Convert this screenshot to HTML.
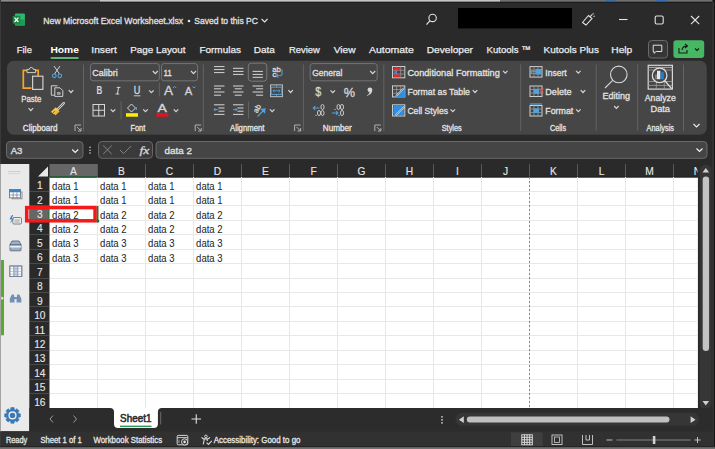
<!DOCTYPE html>
<html><head><meta charset="utf-8">
<style>
*{margin:0;padding:0}
html,body{width:715px;height:449px;overflow:hidden;background:#1f1f1f}
svg{display:block;font-family:"Liberation Sans",sans-serif}
</style></head><body>
<svg width="715" height="449" viewBox="0 0 715 449">
<rect x="0" y="0" width="715" height="449" rx="0" fill="#2a2a2a" />
<rect x="0" y="0" width="100" height="1.8" rx="0" fill="#8a8a8a" />
<rect x="100" y="0" width="400" height="1.8" rx="0" fill="#c4c4c4" />
<rect x="500" y="0" width="215" height="1.8" rx="0" fill="#707070" />
<rect x="606" y="0" width="10" height="1.8" rx="0" fill="#3a6ea8" />
<rect x="655" y="0" width="12" height="1.8" rx="0" fill="#3a6ea8" />
<rect x="0" y="1.8" width="715" height="1" rx="0" fill="#1c1c1c" />
<rect x="0" y="0" width="1" height="449" rx="0" fill="#3a3a3a" />
<rect x="712.5" y="0" width="2.5" height="449" rx="0" fill="#161616" />
<rect x="712.6" y="2" width="1" height="445" rx="0" fill="#4a4a4a" />
<rect x="14.9" y="13.6" width="10" height="12" rx="1" fill="#2fb872" />
<rect x="14.9" y="19.6" width="10" height="6" rx="0.5" fill="#1f9a55" />
<rect x="12.7" y="15.8" width="7.6" height="7.9" rx="0.8" fill="#17873f" />
<path d="M14.6,17.6 L18.4,22 M18.4,17.6 L14.6,22" stroke="#ffffff" fill="none" stroke-width="1.3" />
<text x="43.3" y="23.5" font-size="9.8" fill="#e3e3e3" font-weight="normal" text-anchor="start" textLength="139.8" lengthAdjust="spacingAndGlyphs"  stroke="#e3e3e3" stroke-width="0.3">New Microsoft Excel Worksheet.xlsx</text>
<circle cx="189" cy="21" r="1.3" fill="#e3e3e3"/>
<text x="194.3" y="23.5" font-size="9.8" fill="#e3e3e3" font-weight="normal" text-anchor="start" textLength="63.7" lengthAdjust="spacingAndGlyphs"  stroke="#e3e3e3" stroke-width="0.3">Saved to this PC</text>
<path d="M261.6,19.0 L264.6,22.0 L267.6,19.0" stroke="#e3e3e3" fill="none" stroke-width="1.1" />
<circle cx="432.6" cy="17.9" r="3.7" fill="none" stroke="#e3e3e3" stroke-width="1.1"/>
<line x1="430" y1="20.6" x2="426.5" y2="24.6" stroke="#e3e3e3" stroke-width="1.2" />
<rect x="458" y="8" width="114" height="20.4" rx="0" fill="#000000" />
<path d="M582.5,22.5 L588.5,15.5 L592,18.5 L586,25 Z M582.5,22.5 l3.5,2.5 M590,16.8 l2,-2.2 M592.5,14.5 l1,-1.2 M593.5,16.5 l1.2,-0.6" stroke="#e3e3e3" fill="none" stroke-width="1.1" />
<line x1="619" y1="19.5" x2="627.5" y2="19.5" stroke="#e3e3e3" stroke-width="1.1" />
<rect x="655.2" y="16" width="8" height="8" rx="1.5" fill="none" stroke="#e3e3e3" stroke-width="1.1" />
<line x1="691" y1="16" x2="699.2" y2="24.2" stroke="#e3e3e3" stroke-width="1.1" />
<line x1="699.2" y1="16" x2="691" y2="24.2" stroke="#e3e3e3" stroke-width="1.1" />
<text x="16.8" y="53.4" font-size="9.9" fill="#ededed" font-weight="normal" text-anchor="start" textLength="15.1" lengthAdjust="spacingAndGlyphs" stroke="#ededed" stroke-width="0.25">File</text>
<text x="50.4" y="53.4" font-size="9.9" fill="#ffffff" font-weight="bold" text-anchor="start" textLength="28.5" lengthAdjust="spacingAndGlyphs" >Home</text>
<text x="91.3" y="53.4" font-size="9.9" fill="#ededed" font-weight="normal" text-anchor="start" textLength="25.5" lengthAdjust="spacingAndGlyphs" stroke="#ededed" stroke-width="0.25">Insert</text>
<text x="130.2" y="53.4" font-size="9.9" fill="#ededed" font-weight="normal" text-anchor="start" textLength="55.4" lengthAdjust="spacingAndGlyphs" stroke="#ededed" stroke-width="0.25">Page Layout</text>
<text x="199.4" y="53.4" font-size="9.9" fill="#ededed" font-weight="normal" text-anchor="start" textLength="41.6" lengthAdjust="spacingAndGlyphs" stroke="#ededed" stroke-width="0.25">Formulas</text>
<text x="253.8" y="53.4" font-size="9.9" fill="#ededed" font-weight="normal" text-anchor="start" textLength="21.1" lengthAdjust="spacingAndGlyphs" stroke="#ededed" stroke-width="0.25">Data</text>
<text x="289" y="53.4" font-size="9.9" fill="#ededed" font-weight="normal" text-anchor="start" textLength="30.9" lengthAdjust="spacingAndGlyphs" stroke="#ededed" stroke-width="0.25">Review</text>
<text x="333.7" y="53.4" font-size="9.9" fill="#ededed" font-weight="normal" text-anchor="start" textLength="21.8" lengthAdjust="spacingAndGlyphs" stroke="#ededed" stroke-width="0.25">View</text>
<text x="368.9" y="53.4" font-size="9.9" fill="#ededed" font-weight="normal" text-anchor="start" textLength="45" lengthAdjust="spacingAndGlyphs" stroke="#ededed" stroke-width="0.25">Automate</text>
<text x="426.7" y="53.4" font-size="9.9" fill="#ededed" font-weight="normal" text-anchor="start" textLength="46.3" lengthAdjust="spacingAndGlyphs" stroke="#ededed" stroke-width="0.25">Developer</text>
<text x="486.5" y="53.4" font-size="9.9" fill="#ededed" font-weight="normal" text-anchor="start" textLength="44.3" lengthAdjust="spacingAndGlyphs" stroke="#ededed" stroke-width="0.25">Kutools ™</text>
<text x="543.5" y="53.4" font-size="9.9" fill="#ededed" font-weight="normal" text-anchor="start" textLength="55.4" lengthAdjust="spacingAndGlyphs" stroke="#ededed" stroke-width="0.25">Kutools Plus</text>
<text x="611.3" y="53.4" font-size="9.9" fill="#ededed" font-weight="normal" text-anchor="start" textLength="20.9" lengthAdjust="spacingAndGlyphs" stroke="#ededed" stroke-width="0.25">Help</text>
<rect x="50.5" y="57" width="28.3" height="2" rx="1" fill="#5fb57a" />
<rect x="648.5" y="40.5" width="19" height="17.5" rx="3" fill="#363636" stroke="#6a6a6a" stroke-width="1" />
<path d="M653.2,45.2 h8.6 v6.3 h-5.6 l-2.2,1.8 v-1.8 h-0.8 z" stroke="#e3e3e3" fill="none" stroke-width="1" />
<rect x="673.4" y="40.3" width="30.8" height="17.8" rx="3" fill="#47b763" />
<path d="M679,48 v5 h8 v-3 M682,50 q0.5,-4 5,-4 M685,44 l2.5,2 l-2.5,2" stroke="#1a1a1a" fill="none" stroke-width="1.1" />
<path d="M695.0,48.5 L697,50.5 L699.0,48.5" stroke="#1a1a1a" fill="none" stroke-width="1.1" />
<rect x="7" y="60.8" width="699.8" height="74" rx="7" fill="#464646" />
<line x1="83.5" y1="64.5" x2="83.5" y2="131" stroke="#636363" stroke-width="1" />
<line x1="203.3" y1="64.5" x2="203.3" y2="131" stroke="#636363" stroke-width="1" />
<line x1="303.4" y1="64.5" x2="303.4" y2="131" stroke="#636363" stroke-width="1" />
<line x1="383.8" y1="64.5" x2="383.8" y2="131" stroke="#636363" stroke-width="1" />
<line x1="520.7" y1="64.5" x2="520.7" y2="131" stroke="#636363" stroke-width="1" />
<line x1="596.2" y1="64.5" x2="596.2" y2="131" stroke="#636363" stroke-width="1" />
<line x1="637.7" y1="64.5" x2="637.7" y2="131" stroke="#636363" stroke-width="1" />
<line x1="683.5" y1="64.5" x2="683.5" y2="131" stroke="#636363" stroke-width="1" />
<text x="22.8" y="131" font-size="8.5" fill="#e6e6e6" font-weight="normal" text-anchor="start" textLength="34.7" lengthAdjust="spacingAndGlyphs"  stroke="#e6e6e6" stroke-width="0.3">Clipboard</text>
<text x="130.4" y="131" font-size="8.5" fill="#e6e6e6" font-weight="normal" text-anchor="start" textLength="14.8" lengthAdjust="spacingAndGlyphs"  stroke="#e6e6e6" stroke-width="0.3">Font</text>
<text x="230" y="131" font-size="8.5" fill="#e6e6e6" font-weight="normal" text-anchor="start" textLength="34.5" lengthAdjust="spacingAndGlyphs"  stroke="#e6e6e6" stroke-width="0.3">Alignment</text>
<text x="322.8" y="131" font-size="8.5" fill="#e6e6e6" font-weight="normal" text-anchor="start" textLength="28.9" lengthAdjust="spacingAndGlyphs"  stroke="#e6e6e6" stroke-width="0.3">Number</text>
<text x="441.7" y="131" font-size="8.5" fill="#e6e6e6" font-weight="normal" text-anchor="start" textLength="20.1" lengthAdjust="spacingAndGlyphs"  stroke="#e6e6e6" stroke-width="0.3">Styles</text>
<text x="550" y="131" font-size="8.5" fill="#e6e6e6" font-weight="normal" text-anchor="start" textLength="16.1" lengthAdjust="spacingAndGlyphs"  stroke="#e6e6e6" stroke-width="0.3">Cells</text>
<text x="646.6" y="131" font-size="8.5" fill="#e6e6e6" font-weight="normal" text-anchor="start" textLength="27.4" lengthAdjust="spacingAndGlyphs"  stroke="#e6e6e6" stroke-width="0.3">Analysis</text>
<path d="M75,131 V125 H81" stroke="#bdbdbd" fill="none" stroke-width="0.9" />
<path d="M77,127 L81,131 M81,128 V131 H78" stroke="#bdbdbd" fill="none" stroke-width="0.9" />
<path d="M195.2,131 V125 H201.2" stroke="#bdbdbd" fill="none" stroke-width="0.9" />
<path d="M197.2,127 L201.2,131 M201.2,128 V131 H198.2" stroke="#bdbdbd" fill="none" stroke-width="0.9" />
<path d="M294.6,131 V125 H300.6" stroke="#bdbdbd" fill="none" stroke-width="0.9" />
<path d="M296.6,127 L300.6,131 M300.6,128 V131 H297.6" stroke="#bdbdbd" fill="none" stroke-width="0.9" />
<path d="M374.8,131 V125 H380.8" stroke="#bdbdbd" fill="none" stroke-width="0.9" />
<path d="M376.8,127 L380.8,131 M380.8,128 V131 H377.8" stroke="#bdbdbd" fill="none" stroke-width="0.9" />
<path d="M38.2,77 V70.3 H23.3 V88.2 H31.5" stroke="#f5a623" fill="none" stroke-width="1.7" />
<path d="M27,72.6 V69.4 h2.2 q0.5,-2 2.1,-2 q1.6,0 2.1,2 h2.2 v3.2 z" stroke="#cdcdcd" fill="#464646" stroke-width="1" />
<rect x="32.6" y="76.2" width="10.3" height="13.2" rx="0" fill="#464646" stroke="#cdcdcd" stroke-width="1.2" />
<text x="21.2" y="101.6" font-size="9.5" fill="#e3e3e3" font-weight="normal" text-anchor="start" textLength="20.1" lengthAdjust="spacingAndGlyphs"  stroke="#e3e3e3" stroke-width="0.3">Paste</text>
<path d="M28.55,108.2 L30.8,110.60000000000001 L33.05,108.2" stroke="#d6d6d6" fill="none" stroke-width="1.2" />
<path d="M54,66 L59.5,74 M60,66 L54.5,74" stroke="#d0d0d0" fill="none" stroke-width="1" />
<circle cx="54.3" cy="75.8" r="1.8" fill="none" stroke="#4fa3e0" stroke-width="1.1"/>
<circle cx="59.8" cy="75.8" r="1.8" fill="none" stroke="#4fa3e0" stroke-width="1.1"/>
<path d="M57.5,85.8 H51.3 V95.2 H54.5" stroke="#d0d0d0" fill="none" stroke-width="1" />
<path d="M54.8,87.8 H60 L62.8,90.6 V96.4 H54.8 Z" stroke="#d0d0d0" fill="none" stroke-width="1" />
<rect x="57" y="92" width="3.6" height="2.8" rx="0" fill="#a0a0a0" />
<path d="M68.75,90.1 L71,92.5 L73.25,90.1" stroke="#d6d6d6" fill="none" stroke-width="1.2" />
<path d="M51.2,111.8 L55.6,107.4 L59.6,111.4 L55.6,115.2 Z" stroke="none" fill="#f5b731" stroke-width="1" />
<path d="M51.2,111.8 L55.6,107.4 L57.6,109.4 L53.4,114 Z" stroke="none" fill="#f7c948" stroke-width="1" />
<path d="M52.5,113.2 L55,110.8" stroke="#464646" fill="none" stroke-width="0.8" />
<path d="M57.6,109.4 L63.8,103.2" stroke="#d6d6d6" fill="none" stroke-width="2.4" stroke-linecap="round"/>
<path d="M57.6,109.4 L63.8,103.2" stroke="#464646" fill="none" stroke-width="0.8" />
<rect x="90.5" y="63.6" width="68.8" height="17.2" rx="2.5" fill="#464646" stroke="#787878" stroke-width="0.9" />
<text x="92.3" y="75.7" font-size="9.4" fill="#e3e3e3" font-weight="normal" text-anchor="start" textLength="25.4" lengthAdjust="spacingAndGlyphs"  stroke="#e3e3e3" stroke-width="0.3">Calibri</text>
<path d="M152.8,71.0 L155.3,73.6 L157.8,71.0" stroke="#d6d6d6" fill="none" stroke-width="1.2" />
<rect x="161.5" y="63.6" width="36" height="17.2" rx="2.5" fill="#464646" stroke="#787878" stroke-width="0.9" />
<text x="163.4" y="75.7" font-size="9.4" fill="#e3e3e3" font-weight="normal" text-anchor="start" textLength="8.5" lengthAdjust="spacingAndGlyphs"  stroke="#e3e3e3" stroke-width="0.3">11</text>
<path d="M191.0,71.0 L193.5,73.6 L196.0,71.0" stroke="#d6d6d6" fill="none" stroke-width="1.2" />
<text x="96.6" y="94.4" font-size="10" fill="#d6d6d6" font-weight="bold" text-anchor="start" textLength="5.8" lengthAdjust="spacingAndGlyphs" >B</text>
<path d="M116.8,87.4 h3.6 M115.6,94 h3.6 M118.6,87.4 l-1.2,6.6" stroke="#d6d6d6" fill="none" stroke-width="1" />
<text x="133.8" y="93.5" font-size="10" fill="#d6d6d6" font-weight="normal" text-anchor="start" textLength="6.6" lengthAdjust="spacingAndGlyphs"  stroke="#d6d6d6" stroke-width="0.3">U</text>
<line x1="133.8" y1="95.8" x2="140.4" y2="95.8" stroke="#d6d6d6" stroke-width="0.9" />
<path d="M149.15,90.3 L151.4,92.7 L153.65,90.3" stroke="#d6d6d6" fill="none" stroke-width="1.2" />
<line x1="159.4" y1="82.5" x2="159.4" y2="96.5" stroke="#636363" stroke-width="1" />
<text x="164" y="95" font-size="12" fill="#d6d6d6" font-weight="normal" text-anchor="start" textLength="9" lengthAdjust="spacingAndGlyphs"  stroke="#d6d6d6" stroke-width="0.3">A</text>
<path d="M173,88 l1.6,-1.7 l1.6,1.7" stroke="#4fa3e0" fill="none" stroke-width="1" />
<text x="184.7" y="95" font-size="10.5" fill="#d6d6d6" font-weight="normal" text-anchor="start" textLength="7.5" lengthAdjust="spacingAndGlyphs"  stroke="#d6d6d6" stroke-width="0.3">A</text>
<path d="M192.5,86.5 l1.5,1.5 l1.5,-1.5" stroke="#4fa3e0" fill="none" stroke-width="1" />
<rect x="93" y="104.5" width="11.5" height="11.5" rx="0" fill="none" stroke="#d6d6d6" stroke-width="1" />
<line x1="98.75" y1="104.5" x2="98.75" y2="116" stroke="#d6d6d6" stroke-width="1" />
<line x1="93" y1="110.25" x2="104.5" y2="110.25" stroke="#d6d6d6" stroke-width="1" />
<path d="M110.75,109.3 L113,111.7 L115.25,109.3" stroke="#d6d6d6" fill="none" stroke-width="1.2" />
<line x1="121.1" y1="101" x2="121.1" y2="119.4" stroke="#636363" stroke-width="1" />
<path d="M127.5,108 l4,-4 l4,4 l-4,4 z" stroke="#d6d6d6" fill="none" stroke-width="1" />
<path d="M136.3,107 v3" stroke="#4fa3e0" fill="none" stroke-width="1.2" />
<rect x="126" y="113.2" width="12" height="3.5" rx="0" fill="#ffee00" />
<path d="M143.25,109.3 L145.5,111.7 L147.75,109.3" stroke="#d6d6d6" fill="none" stroke-width="1.2" />
<text x="157.6" y="112.4" font-size="10.5" fill="#d6d6d6" font-weight="normal" text-anchor="start" textLength="9.4" lengthAdjust="spacingAndGlyphs"  stroke="#d6d6d6" stroke-width="0.3">A</text>
<rect x="156.2" y="113.2" width="12" height="3.5" rx="0" fill="#e81123" />
<path d="M173.75,109.3 L176,111.7 L178.25,109.3" stroke="#d6d6d6" fill="none" stroke-width="1.2" />
<line x1="214" y1="66.6" x2="224.5" y2="66.6" stroke="#d6d6d6" stroke-width="1" />
<line x1="214" y1="69.6" x2="224.5" y2="69.6" stroke="#d6d6d6" stroke-width="1" />
<line x1="214" y1="72.6" x2="224.5" y2="72.6" stroke="#d6d6d6" stroke-width="1" />
<line x1="233" y1="68.3" x2="243.5" y2="68.3" stroke="#d6d6d6" stroke-width="1" />
<line x1="233" y1="71.4" x2="243.5" y2="71.4" stroke="#d6d6d6" stroke-width="1" />
<line x1="233" y1="74.4" x2="243.5" y2="74.4" stroke="#d6d6d6" stroke-width="1" />
<rect x="248.3" y="63.2" width="18.5" height="18" rx="3" fill="#474747" stroke="#7a7a7a" stroke-width="1" />
<line x1="252.6" y1="71.4" x2="262.9" y2="71.4" stroke="#d6d6d6" stroke-width="1" />
<line x1="252.6" y1="74.4" x2="262.9" y2="74.4" stroke="#d6d6d6" stroke-width="1" />
<line x1="252.6" y1="77.3" x2="262.9" y2="77.3" stroke="#d6d6d6" stroke-width="1" />
<text x="272.2" y="71.6" font-size="7.2" fill="#d6d6d6" font-weight="normal" text-anchor="start" textLength="8.6" lengthAdjust="spacingAndGlyphs"  stroke="#d6d6d6" stroke-width="0.3">ab</text>
<text x="272.2" y="77.4" font-size="7.2" fill="#d6d6d6" font-weight="normal" text-anchor="start" textLength="4.4" lengthAdjust="spacingAndGlyphs"  stroke="#d6d6d6" stroke-width="0.3">c</text>
<path d="M282,69.5 v4.6 q0,1.6 -1.6,1.6 h-4.2 M278,73.8 l-1.9,1.9 l1.9,1.9" stroke="#4fa3e0" fill="none" stroke-width="1.1" />
<line x1="214" y1="86" x2="224.5" y2="86" stroke="#d6d6d6" stroke-width="1" />
<line x1="214" y1="88.8" x2="221" y2="88.8" stroke="#d6d6d6" stroke-width="1" />
<line x1="214" y1="92" x2="224.5" y2="92" stroke="#d6d6d6" stroke-width="1" />
<line x1="214" y1="95.2" x2="221" y2="95.2" stroke="#d6d6d6" stroke-width="1" />
<line x1="233.0" y1="86" x2="243.5" y2="86" stroke="#d6d6d6" stroke-width="1" />
<line x1="234.75" y1="88.8" x2="241.75" y2="88.8" stroke="#d6d6d6" stroke-width="1" />
<line x1="233.0" y1="92" x2="243.5" y2="92" stroke="#d6d6d6" stroke-width="1" />
<line x1="234.75" y1="95.2" x2="241.75" y2="95.2" stroke="#d6d6d6" stroke-width="1" />
<line x1="252.60000000000002" y1="86" x2="263.1" y2="86" stroke="#d6d6d6" stroke-width="1" />
<line x1="256.1" y1="88.8" x2="263.1" y2="88.8" stroke="#d6d6d6" stroke-width="1" />
<line x1="252.60000000000002" y1="92" x2="263.1" y2="92" stroke="#d6d6d6" stroke-width="1" />
<line x1="256.1" y1="95.2" x2="263.1" y2="95.2" stroke="#d6d6d6" stroke-width="1" />
<rect x="270.6" y="84.9" width="11.8" height="11.8" rx="0" fill="none" stroke="#cfcfcf" stroke-width="0.9" />
<rect x="271.2" y="87.2" width="10.6" height="7.2" rx="0" fill="none" stroke="#4fa3e0" stroke-width="1" />
<line x1="276.5" y1="84.9" x2="276.5" y2="87.2" stroke="#9a9a9a" stroke-width="0.8" />
<line x1="276.5" y1="94.4" x2="276.5" y2="96.7" stroke="#9a9a9a" stroke-width="0.8" />
<path d="M273,90.8 h7 M274.4,89.4 l-1.4,1.4 l1.4,1.4 M278.6,89.4 l1.4,1.4 l-1.4,1.4" stroke="#4fa3e0" fill="none" stroke-width="0.9" />
<path d="M288.35,90.1 L290.6,92.5 L292.85,90.1" stroke="#d6d6d6" fill="none" stroke-width="1.2" />
<line x1="214" y1="104.8" x2="224.5" y2="104.8" stroke="#d6d6d6" stroke-width="1" />
<line x1="218.5" y1="108" x2="224.5" y2="108" stroke="#d6d6d6" stroke-width="1" />
<line x1="218.5" y1="111.2" x2="224.5" y2="111.2" stroke="#d6d6d6" stroke-width="1" />
<line x1="214" y1="114.4" x2="224.5" y2="114.4" stroke="#d6d6d6" stroke-width="1" />
<path d="M218,109.6 h-4 M215.5,108 l-1.5,1.6 l1.5,1.6" stroke="#4fa3e0" fill="none" stroke-width="1" />
<line x1="233" y1="104.8" x2="243.5" y2="104.8" stroke="#d6d6d6" stroke-width="1" />
<line x1="237.5" y1="108" x2="243.5" y2="108" stroke="#d6d6d6" stroke-width="1" />
<line x1="237.5" y1="111.2" x2="243.5" y2="111.2" stroke="#d6d6d6" stroke-width="1" />
<line x1="233" y1="114.4" x2="243.5" y2="114.4" stroke="#d6d6d6" stroke-width="1" />
<path d="M233,109.6 h4 M235.5,108 l1.5,1.6 l-1.5,1.6" stroke="#4fa3e0" fill="none" stroke-width="1" />
<line x1="248.5" y1="101.7" x2="248.5" y2="118.6" stroke="#636363" stroke-width="1" />
<text x="0" y="0" font-size="7.5" fill="#d6d6d6" font-weight="normal" text-anchor="start" textLength="8.5" lengthAdjust="spacingAndGlyphs" transform="translate(257.2,113.6) rotate(-62)" stroke="#d6d6d6" stroke-width="0.3">ab</text>
<path d="M257.5,116.5 L264,110 M261.3,109.2 L265,108.8 L264.6,112.5 Z" stroke="#4fa3e0" fill="#4fa3e0" stroke-width="1.1" />
<path d="M269.95,109.3 L272.2,111.7 L274.45,109.3" stroke="#d6d6d6" fill="none" stroke-width="1.2" />
<rect x="310.2" y="63.6" width="67" height="17.2" rx="2.5" fill="#464646" stroke="#787878" stroke-width="0.9" />
<text x="312.2" y="75.7" font-size="9.4" fill="#e3e3e3" font-weight="normal" text-anchor="start" textLength="30.2" lengthAdjust="spacingAndGlyphs"  stroke="#e3e3e3" stroke-width="0.3">General</text>
<path d="M370.2,71.0 L372.7,73.6 L375.2,71.0" stroke="#d6d6d6" fill="none" stroke-width="1.2" />
<text x="315.2" y="96.2" font-size="12.5" fill="#d6d6d6" font-weight="normal" text-anchor="start" textLength="6" lengthAdjust="spacingAndGlyphs"  stroke="#d6d6d6" stroke-width="0.3">$</text>
<path d="M330.55,90.3 L332.8,92.7 L335.05,90.3" stroke="#d6d6d6" fill="none" stroke-width="1.2" />
<text x="343.7" y="96.6" font-size="12.5" fill="#d6d6d6" font-weight="normal" text-anchor="start" textLength="11.3" lengthAdjust="spacingAndGlyphs"  stroke="#d6d6d6" stroke-width="0.3">%</text>
<circle cx="369.9" cy="89.8" r="2.4" fill="#d6d6d6"/>
<path d="M372.2,90 q0.4,4.4 -6.2,6 q3.6,-2 3.6,-4.6 z" stroke="none" fill="#d6d6d6" stroke-width="1" />
<ellipse cx="322.5" cy="107" rx="1.55" ry="2.6" fill="none" stroke="#d6d6d6" stroke-width="0.9"/>
<ellipse cx="319" cy="113" rx="1.55" ry="2.6" fill="none" stroke="#d6d6d6" stroke-width="0.9"/>
<ellipse cx="322.5" cy="113" rx="1.55" ry="2.6" fill="none" stroke="#d6d6d6" stroke-width="0.9"/>
<circle cx="316" cy="115.3" r="0.6" fill="#d6d6d6"/>
<path d="M319.5,108 h-6 M315.2,106.2 l-1.9,1.8 l1.9,1.8" stroke="#4fa3e0" fill="none" stroke-width="1.1" />
<ellipse cx="338.5" cy="107" rx="1.55" ry="2.6" fill="none" stroke="#d6d6d6" stroke-width="0.9"/>
<ellipse cx="342" cy="107" rx="1.55" ry="2.6" fill="none" stroke="#d6d6d6" stroke-width="0.9"/>
<circle cx="335" cy="109.3" r="0.6" fill="#d6d6d6"/>
<ellipse cx="342" cy="113" rx="1.55" ry="2.6" fill="none" stroke="#d6d6d6" stroke-width="0.9"/>
<circle cx="339" cy="115.3" r="0.6" fill="#d6d6d6"/>
<path d="M331.8,113 h6 M336,111.2 l1.9,1.8 l-1.9,1.8" stroke="#4fa3e0" fill="none" stroke-width="1.1" />
<rect x="392.5" y="66.5" width="12.3" height="11.3" rx="0" fill="none" stroke="#cfcfcf" stroke-width="1" />
<line x1="396.6" y1="66.5" x2="396.6" y2="77.8" stroke="#9a9a9a" stroke-width="0.8" />
<line x1="392.5" y1="70.26666666666667" x2="404.8" y2="70.26666666666667" stroke="#9a9a9a" stroke-width="0.8" />
<line x1="400.7" y1="66.5" x2="400.7" y2="77.8" stroke="#9a9a9a" stroke-width="0.8" />
<line x1="392.5" y1="74.03333333333333" x2="404.8" y2="74.03333333333333" stroke="#9a9a9a" stroke-width="0.8" />
<rect x="393.8" y="67.6" width="6.5" height="2.6" rx="0" fill="#e8262b" />
<rect x="393.8" y="74.6" width="6.5" height="2.6" rx="0" fill="#e8262b" />
<rect x="394.2" y="71.2" width="2.6" height="2.4" rx="0" fill="#2f8fe6" />
<text x="407.4" y="75.8" font-size="9.4" fill="#e3e3e3" font-weight="normal" text-anchor="start" textLength="92.4" lengthAdjust="spacingAndGlyphs"  stroke="#e3e3e3" stroke-width="0.3">Conditional Formatting</text>
<path d="M503.05,70.8 L505.3,73.2 L507.55,70.8" stroke="#d6d6d6" fill="none" stroke-width="1.2" />
<rect x="392.5" y="85.9" width="12.3" height="11" rx="0" fill="none" stroke="#cfcfcf" stroke-width="1" />
<line x1="396.6" y1="85.9" x2="396.6" y2="96.9" stroke="#9a9a9a" stroke-width="0.8" />
<line x1="392.5" y1="89.56666666666668" x2="404.8" y2="89.56666666666668" stroke="#9a9a9a" stroke-width="0.8" />
<line x1="400.7" y1="85.9" x2="400.7" y2="96.9" stroke="#9a9a9a" stroke-width="0.8" />
<line x1="392.5" y1="93.23333333333333" x2="404.8" y2="93.23333333333333" stroke="#9a9a9a" stroke-width="0.8" />
<path d="M395,96.9 L404.8,88 V96.9 Z" stroke="none" fill="#2f8fe6" stroke-width="1" />
<path d="M396,96 L404,88" stroke="#e6e6e6" fill="none" stroke-width="1.6" />
<path d="M396,96 L404,88" stroke="#464646" fill="none" stroke-width="0.5" />
<text x="407.4" y="95" font-size="9.4" fill="#e3e3e3" font-weight="normal" text-anchor="start" textLength="62.6" lengthAdjust="spacingAndGlyphs"  stroke="#e3e3e3" stroke-width="0.3">Format as Table</text>
<path d="M472.75,90.1 L475,92.5 L477.25,90.1" stroke="#d6d6d6" fill="none" stroke-width="1.2" />
<rect x="392.5" y="104.8" width="12.3" height="11.2" rx="0" fill="none" stroke="#cfcfcf" stroke-width="1" />
<line x1="396.6" y1="104.8" x2="396.6" y2="116.0" stroke="#9a9a9a" stroke-width="0.8" />
<line x1="392.5" y1="108.53333333333333" x2="404.8" y2="108.53333333333333" stroke="#9a9a9a" stroke-width="0.8" />
<line x1="400.7" y1="104.8" x2="400.7" y2="116.0" stroke="#9a9a9a" stroke-width="0.8" />
<line x1="392.5" y1="112.26666666666667" x2="404.8" y2="112.26666666666667" stroke="#9a9a9a" stroke-width="0.8" />
<rect x="393.5" y="105.8" width="10.3" height="9.2" rx="0" fill="#2f8fe6" />
<path d="M395.5,115.5 L404.5,106.5" stroke="#e6e6e6" fill="none" stroke-width="1.6" />
<path d="M395.5,115.5 L404.5,106.5" stroke="#464646" fill="none" stroke-width="0.5" />
<text x="407.4" y="114" font-size="9.4" fill="#e3e3e3" font-weight="normal" text-anchor="start" textLength="40.6" lengthAdjust="spacingAndGlyphs"  stroke="#e3e3e3" stroke-width="0.3">Cell Styles</text>
<path d="M450.55,109.3 L452.8,111.7 L455.05,109.3" stroke="#d6d6d6" fill="none" stroke-width="1.2" />
<rect x="530" y="66.6" width="12" height="10.5" rx="0" fill="none" stroke="#cfcfcf" stroke-width="1" />
<line x1="534.0" y1="66.6" x2="534.0" y2="77.1" stroke="#9a9a9a" stroke-width="0.8" />
<line x1="530" y1="70.1" x2="542" y2="70.1" stroke="#9a9a9a" stroke-width="0.8" />
<line x1="538.0" y1="66.6" x2="538.0" y2="77.1" stroke="#9a9a9a" stroke-width="0.8" />
<line x1="530" y1="73.6" x2="542" y2="73.6" stroke="#9a9a9a" stroke-width="0.8" />
<rect x="535.5" y="69" width="6" height="5.5" rx="0" fill="#4fa3e0" />
<path d="M537,71.7 h-6 M532.5,70 l-1.8,1.7 l1.8,1.7" stroke="#4fa3e0" fill="none" stroke-width="1" />
<text x="545.3" y="75.8" font-size="9.4" fill="#e3e3e3" font-weight="normal" text-anchor="start" textLength="21.4" lengthAdjust="spacingAndGlyphs"  stroke="#e3e3e3" stroke-width="0.3">Insert</text>
<path d="M576.05,70.8 L578.3,73.2 L580.55,70.8" stroke="#d6d6d6" fill="none" stroke-width="1.2" />
<rect x="530" y="86" width="12" height="10.5" rx="0" fill="none" stroke="#cfcfcf" stroke-width="1" />
<line x1="534.0" y1="86" x2="534.0" y2="96.5" stroke="#9a9a9a" stroke-width="0.8" />
<line x1="530" y1="89.5" x2="542" y2="89.5" stroke="#9a9a9a" stroke-width="0.8" />
<line x1="538.0" y1="86" x2="538.0" y2="96.5" stroke="#9a9a9a" stroke-width="0.8" />
<line x1="530" y1="93.0" x2="542" y2="93.0" stroke="#9a9a9a" stroke-width="0.8" />
<rect x="533.5" y="88.8" width="5.5" height="5" rx="0" fill="#4fa3e0" />
<path d="M539.5,88.5 l4,4 M543.5,88.5 l-4,4" stroke="#e74c3c" fill="none" stroke-width="1.1" />
<text x="545.3" y="95" font-size="9.4" fill="#e3e3e3" font-weight="normal" text-anchor="start" textLength="26.2" lengthAdjust="spacingAndGlyphs"  stroke="#e3e3e3" stroke-width="0.3">Delete</text>
<path d="M580.75,90.1 L583,92.5 L585.25,90.1" stroke="#d6d6d6" fill="none" stroke-width="1.2" />
<rect x="530" y="105.5" width="12" height="10.5" rx="0" fill="none" stroke="#cfcfcf" stroke-width="1" />
<line x1="534.0" y1="105.5" x2="534.0" y2="116.0" stroke="#9a9a9a" stroke-width="0.8" />
<line x1="530" y1="109.0" x2="542" y2="109.0" stroke="#9a9a9a" stroke-width="0.8" />
<line x1="538.0" y1="105.5" x2="538.0" y2="116.0" stroke="#9a9a9a" stroke-width="0.8" />
<line x1="530" y1="112.5" x2="542" y2="112.5" stroke="#9a9a9a" stroke-width="0.8" />
<rect x="533.5" y="108.5" width="5.5" height="4.5" rx="0" fill="#4fa3e0" />
<line x1="530" y1="104" x2="542" y2="104" stroke="#4fa3e0" stroke-width="1.2" />
<text x="545.3" y="114" font-size="9.4" fill="#e3e3e3" font-weight="normal" text-anchor="start" textLength="28" lengthAdjust="spacingAndGlyphs"  stroke="#e3e3e3" stroke-width="0.3">Format</text>
<path d="M576.05,109.3 L578.3,111.7 L580.55,109.3" stroke="#d6d6d6" fill="none" stroke-width="1.2" />
<circle cx="618.8" cy="74.4" r="8.3" fill="none" stroke="#d6d6d6" stroke-width="1.1"/>
<line x1="612.7" y1="80.3" x2="605" y2="88" stroke="#d6d6d6" stroke-width="1.1" />
<text x="602.5" y="99.3" font-size="9.3" fill="#e3e3e3" font-weight="normal" text-anchor="start" textLength="27.5" lengthAdjust="spacingAndGlyphs"  stroke="#e3e3e3" stroke-width="0.3">Editing</text>
<path d="M614.15,106.0 L616.4,108.4 L618.65,106.0" stroke="#d6d6d6" fill="none" stroke-width="1.2" />
<rect x="648.2" y="65.3" width="24.2" height="23.8" rx="0" fill="none" stroke="#d8d8d8" stroke-width="1.2" />
<line x1="648.2" y1="67.4" x2="672.4" y2="67.4" stroke="#c8c8c8" stroke-width="0.8" />
<line x1="656.3" y1="67.4" x2="656.3" y2="89.1" stroke="#a0a0a0" stroke-width="0.8" />
<line x1="664.3" y1="67.4" x2="664.3" y2="89.1" stroke="#a0a0a0" stroke-width="0.8" />
<line x1="648.2" y1="70" x2="672.4" y2="70" stroke="#a0a0a0" stroke-width="0.8" />
<line x1="648.2" y1="81.5" x2="672.4" y2="81.5" stroke="#a0a0a0" stroke-width="0.8" />
<line x1="648.2" y1="85.4" x2="672.4" y2="85.4" stroke="#a0a0a0" stroke-width="0.8" />
<circle cx="659.6" cy="75.4" r="7.3" fill="#464646" stroke="#dcdcdc" stroke-width="1.3"/>
<rect x="657" y="70.8" width="3.4" height="8.4" rx="0" fill="#e8e8e8" />
<rect x="660.6" y="72.2" width="3.2" height="7" rx="0" fill="#1f7fd8" />
<rect x="655.2" y="74.5" width="1.6" height="4.7" rx="0" fill="#8a8a8a" />
<line x1="664.8" y1="80.8" x2="671.6" y2="88.6" stroke="#dcdcdc" stroke-width="1.4" />
<text x="644.8" y="100.6" font-size="9.5" fill="#e3e3e3" font-weight="normal" text-anchor="start" textLength="31" lengthAdjust="spacingAndGlyphs"  stroke="#e3e3e3" stroke-width="0.3">Analyze</text>
<text x="650.5" y="112.2" font-size="9.5" fill="#e3e3e3" font-weight="normal" text-anchor="start" textLength="19.5" lengthAdjust="spacingAndGlyphs"  stroke="#e3e3e3" stroke-width="0.3">Data</text>
<path d="M693.5,124.0 L696.5,127.0 L699.5,124.0" stroke="#e6e6e6" fill="none" stroke-width="1.2" />
<rect x="6.5" y="141.5" width="76.5" height="16.8" rx="3.5" fill="#454545" stroke="#6a6a6a" stroke-width="1" />
<text x="10.7" y="153.6" font-size="9.6" fill="#e3e3e3" font-weight="normal" text-anchor="start" textLength="11.7" lengthAdjust="spacingAndGlyphs"  stroke="#e3e3e3" stroke-width="0.3">A3</text>
<path d="M72.2,149.5 L75.2,152.5 L78.2,149.5" stroke="#f0f0f0" fill="none" stroke-width="1.2" />
<circle cx="90" cy="147.3" r="0.8" fill="#cfcfcf"/>
<circle cx="90" cy="150.2" r="0.8" fill="#cfcfcf"/>
<circle cx="90" cy="153" r="0.8" fill="#cfcfcf"/>
<rect x="98.5" y="141.5" width="54" height="16.8" rx="3.5" fill="#3a3a3a" stroke="#666666" stroke-width="1" />
<path d="M103.2,145.5 l8.6,8.6 M111.8,145.5 l-8.6,8.6" stroke="#858585" fill="none" stroke-width="1" />
<path d="M120,150 l3.6,3.6 l7.6,-7.6" stroke="#858585" fill="none" stroke-width="1" />
<text x="139.5" y="154" font-size="11" fill="#d8d8d8" font-weight="normal" text-anchor="start" textLength="10" lengthAdjust="spacingAndGlyphs" font-family="Liberation Serif" font-style="italic" stroke="#d8d8d8" stroke-width="0.3">fx</text>
<rect x="156" y="141.5" width="551" height="16.8" rx="3.5" fill="#454545" stroke="#6a6a6a" stroke-width="1" />
<text x="164.6" y="153.6" font-size="9.5" fill="#e3e3e3" font-weight="normal" text-anchor="start" textLength="27.3" lengthAdjust="spacingAndGlyphs"  stroke="#e3e3e3" stroke-width="0.3">data 2</text>
<path d="M696.5,148.5 L699.5,151.5 L702.5,148.5" stroke="#f0f0f0" fill="none" stroke-width="1.2" />
<defs><clipPath id="hclip"><rect x="29" y="160" width="668.5" height="20"/></clipPath></defs>
<rect x="29.5" y="164" width="668.4" height="13" rx="0" fill="#2a2a2a" />
<rect x="29.5" y="177" width="20" height="231" rx="0" fill="#2a2a2a" />
<path d="M38,176.5 L48,176.5 L48,166.5 Z" stroke="none" fill="#e8e8e8" stroke-width="1" />
<rect x="49.5" y="164" width="48.0" height="12.6" rx="0" fill="#666666" />
<rect x="29.5" y="205.88" width="20" height="14.44" rx="0" fill="#666666" />
<rect x="48.3" y="205.88" width="1.4" height="14.44" rx="0" fill="#1d7a42" />
<rect x="49.5" y="177" width="648.4" height="231" rx="0" fill="#ffffff" />
<rect x="49.5" y="176.6" width="648.4" height="1.1" rx="0" fill="#1e1e1e" />
<line x1="49.5" y1="191.5" x2="697.9" y2="191.5" stroke="#e8e8e8" stroke-width="1" />
<line x1="29.5" y1="191.5" x2="49.5" y2="191.5" stroke="#4a4a4a" stroke-width="1" />
<line x1="49.5" y1="205.5" x2="697.9" y2="205.5" stroke="#e8e8e8" stroke-width="1" />
<line x1="29.5" y1="205.5" x2="49.5" y2="205.5" stroke="#4a4a4a" stroke-width="1" />
<line x1="49.5" y1="220.5" x2="697.9" y2="220.5" stroke="#e8e8e8" stroke-width="1" />
<line x1="29.5" y1="220.5" x2="49.5" y2="220.5" stroke="#4a4a4a" stroke-width="1" />
<line x1="49.5" y1="234.5" x2="697.9" y2="234.5" stroke="#e8e8e8" stroke-width="1" />
<line x1="29.5" y1="234.5" x2="49.5" y2="234.5" stroke="#4a4a4a" stroke-width="1" />
<line x1="49.5" y1="249.5" x2="697.9" y2="249.5" stroke="#e8e8e8" stroke-width="1" />
<line x1="29.5" y1="249.5" x2="49.5" y2="249.5" stroke="#4a4a4a" stroke-width="1" />
<line x1="49.5" y1="263.5" x2="697.9" y2="263.5" stroke="#e8e8e8" stroke-width="1" />
<line x1="29.5" y1="263.5" x2="49.5" y2="263.5" stroke="#4a4a4a" stroke-width="1" />
<line x1="49.5" y1="278.5" x2="697.9" y2="278.5" stroke="#e8e8e8" stroke-width="1" />
<line x1="29.5" y1="278.5" x2="49.5" y2="278.5" stroke="#4a4a4a" stroke-width="1" />
<line x1="49.5" y1="292.5" x2="697.9" y2="292.5" stroke="#e8e8e8" stroke-width="1" />
<line x1="29.5" y1="292.5" x2="49.5" y2="292.5" stroke="#4a4a4a" stroke-width="1" />
<line x1="49.5" y1="306.5" x2="697.9" y2="306.5" stroke="#e8e8e8" stroke-width="1" />
<line x1="29.5" y1="306.5" x2="49.5" y2="306.5" stroke="#4a4a4a" stroke-width="1" />
<line x1="49.5" y1="321.5" x2="697.9" y2="321.5" stroke="#e8e8e8" stroke-width="1" />
<line x1="29.5" y1="321.5" x2="49.5" y2="321.5" stroke="#4a4a4a" stroke-width="1" />
<line x1="49.5" y1="335.5" x2="697.9" y2="335.5" stroke="#e8e8e8" stroke-width="1" />
<line x1="29.5" y1="335.5" x2="49.5" y2="335.5" stroke="#4a4a4a" stroke-width="1" />
<line x1="49.5" y1="350.5" x2="697.9" y2="350.5" stroke="#e8e8e8" stroke-width="1" />
<line x1="29.5" y1="350.5" x2="49.5" y2="350.5" stroke="#4a4a4a" stroke-width="1" />
<line x1="49.5" y1="364.5" x2="697.9" y2="364.5" stroke="#e8e8e8" stroke-width="1" />
<line x1="29.5" y1="364.5" x2="49.5" y2="364.5" stroke="#4a4a4a" stroke-width="1" />
<line x1="49.5" y1="379.5" x2="697.9" y2="379.5" stroke="#e8e8e8" stroke-width="1" />
<line x1="29.5" y1="379.5" x2="49.5" y2="379.5" stroke="#4a4a4a" stroke-width="1" />
<line x1="49.5" y1="393.5" x2="697.9" y2="393.5" stroke="#e8e8e8" stroke-width="1" />
<line x1="29.5" y1="393.5" x2="49.5" y2="393.5" stroke="#4a4a4a" stroke-width="1" />
<line x1="49.5" y1="408.5" x2="697.9" y2="408.5" stroke="#e8e8e8" stroke-width="1" />
<line x1="29.5" y1="408.5" x2="49.5" y2="408.5" stroke="#4a4a4a" stroke-width="1" />
<line x1="97.5" y1="177" x2="97.5" y2="408" stroke="#e8e8e8" stroke-width="1" />
<line x1="97.5" y1="164" x2="97.5" y2="176.6" stroke="#5a5a5a" stroke-width="1" />
<line x1="145.5" y1="177" x2="145.5" y2="408" stroke="#e8e8e8" stroke-width="1" />
<line x1="145.5" y1="164" x2="145.5" y2="176.6" stroke="#5a5a5a" stroke-width="1" />
<line x1="193.5" y1="177" x2="193.5" y2="408" stroke="#e8e8e8" stroke-width="1" />
<line x1="193.5" y1="164" x2="193.5" y2="176.6" stroke="#5a5a5a" stroke-width="1" />
<line x1="241.5" y1="177" x2="241.5" y2="408" stroke="#e8e8e8" stroke-width="1" />
<line x1="241.5" y1="164" x2="241.5" y2="176.6" stroke="#5a5a5a" stroke-width="1" />
<line x1="289.5" y1="177" x2="289.5" y2="408" stroke="#e8e8e8" stroke-width="1" />
<line x1="289.5" y1="164" x2="289.5" y2="176.6" stroke="#5a5a5a" stroke-width="1" />
<line x1="337.5" y1="177" x2="337.5" y2="408" stroke="#e8e8e8" stroke-width="1" />
<line x1="337.5" y1="164" x2="337.5" y2="176.6" stroke="#5a5a5a" stroke-width="1" />
<line x1="385.5" y1="177" x2="385.5" y2="408" stroke="#e8e8e8" stroke-width="1" />
<line x1="385.5" y1="164" x2="385.5" y2="176.6" stroke="#5a5a5a" stroke-width="1" />
<line x1="433.5" y1="177" x2="433.5" y2="408" stroke="#e8e8e8" stroke-width="1" />
<line x1="433.5" y1="164" x2="433.5" y2="176.6" stroke="#5a5a5a" stroke-width="1" />
<line x1="481.5" y1="177" x2="481.5" y2="408" stroke="#e8e8e8" stroke-width="1" />
<line x1="481.5" y1="164" x2="481.5" y2="176.6" stroke="#5a5a5a" stroke-width="1" />
<line x1="529.5" y1="177" x2="529.5" y2="408" stroke="#e8e8e8" stroke-width="1" />
<line x1="529.5" y1="164" x2="529.5" y2="176.6" stroke="#5a5a5a" stroke-width="1" />
<line x1="577.5" y1="177" x2="577.5" y2="408" stroke="#e8e8e8" stroke-width="1" />
<line x1="577.5" y1="164" x2="577.5" y2="176.6" stroke="#5a5a5a" stroke-width="1" />
<line x1="625.5" y1="177" x2="625.5" y2="408" stroke="#e8e8e8" stroke-width="1" />
<line x1="625.5" y1="164" x2="625.5" y2="176.6" stroke="#5a5a5a" stroke-width="1" />
<line x1="673.5" y1="177" x2="673.5" y2="408" stroke="#e8e8e8" stroke-width="1" />
<line x1="673.5" y1="164" x2="673.5" y2="176.6" stroke="#5a5a5a" stroke-width="1" />
<line x1="529.5" y1="177" x2="529.5" y2="408" stroke="#8a8a8a" stroke-width="1" stroke-dasharray="2,2"/>
<rect x="49.5" y="176.5" width="48.0" height="1.5" rx="0" fill="#1d7a42" />
<text x="73.5" y="175" font-size="10.2" fill="#e6e6e6" font-weight="normal" text-anchor="middle" clip-path="url(#hclip)" stroke="#e6e6e6" stroke-width="0.12">A</text>
<text x="121.5" y="175" font-size="10.2" fill="#e6e6e6" font-weight="normal" text-anchor="middle" clip-path="url(#hclip)" stroke="#e6e6e6" stroke-width="0.12">B</text>
<text x="169.5" y="175" font-size="10.2" fill="#e6e6e6" font-weight="normal" text-anchor="middle" clip-path="url(#hclip)" stroke="#e6e6e6" stroke-width="0.12">C</text>
<text x="217.5" y="175" font-size="10.2" fill="#e6e6e6" font-weight="normal" text-anchor="middle" clip-path="url(#hclip)" stroke="#e6e6e6" stroke-width="0.12">D</text>
<text x="265.5" y="175" font-size="10.2" fill="#e6e6e6" font-weight="normal" text-anchor="middle" clip-path="url(#hclip)" stroke="#e6e6e6" stroke-width="0.12">E</text>
<text x="313.5" y="175" font-size="10.2" fill="#e6e6e6" font-weight="normal" text-anchor="middle" clip-path="url(#hclip)" stroke="#e6e6e6" stroke-width="0.12">F</text>
<text x="361.5" y="175" font-size="10.2" fill="#e6e6e6" font-weight="normal" text-anchor="middle" clip-path="url(#hclip)" stroke="#e6e6e6" stroke-width="0.12">G</text>
<text x="409.5" y="175" font-size="10.2" fill="#e6e6e6" font-weight="normal" text-anchor="middle" clip-path="url(#hclip)" stroke="#e6e6e6" stroke-width="0.12">H</text>
<text x="457.5" y="175" font-size="10.2" fill="#e6e6e6" font-weight="normal" text-anchor="middle" clip-path="url(#hclip)" stroke="#e6e6e6" stroke-width="0.12">I</text>
<text x="505.5" y="175" font-size="10.2" fill="#e6e6e6" font-weight="normal" text-anchor="middle" clip-path="url(#hclip)" stroke="#e6e6e6" stroke-width="0.12">J</text>
<text x="553.5" y="175" font-size="10.2" fill="#e6e6e6" font-weight="normal" text-anchor="middle" clip-path="url(#hclip)" stroke="#e6e6e6" stroke-width="0.12">K</text>
<text x="601.5" y="175" font-size="10.2" fill="#e6e6e6" font-weight="normal" text-anchor="middle" clip-path="url(#hclip)" stroke="#e6e6e6" stroke-width="0.12">L</text>
<text x="649.5" y="175" font-size="10.2" fill="#e6e6e6" font-weight="normal" text-anchor="middle" clip-path="url(#hclip)" stroke="#e6e6e6" stroke-width="0.12">M</text>
<text x="697.5" y="175" font-size="10.2" fill="#e6e6e6" font-weight="normal" text-anchor="middle" clip-path="url(#hclip)" stroke="#e6e6e6" stroke-width="0.12">N</text>
<text x="39.8" y="189.12" font-size="10.2" fill="#e6e6e6" font-weight="normal" text-anchor="middle"  stroke="#e6e6e6" stroke-width="0.12">1</text>
<text x="39.8" y="203.56" font-size="10.2" fill="#e6e6e6" font-weight="normal" text-anchor="middle"  stroke="#e6e6e6" stroke-width="0.12">2</text>
<text x="39.8" y="218.0" font-size="10.2" fill="#e6e6e6" font-weight="normal" text-anchor="middle"  stroke="#e6e6e6" stroke-width="0.12">3</text>
<text x="39.8" y="232.44" font-size="10.2" fill="#e6e6e6" font-weight="normal" text-anchor="middle"  stroke="#e6e6e6" stroke-width="0.12">4</text>
<text x="39.8" y="246.88" font-size="10.2" fill="#e6e6e6" font-weight="normal" text-anchor="middle"  stroke="#e6e6e6" stroke-width="0.12">5</text>
<text x="39.8" y="261.32" font-size="10.2" fill="#e6e6e6" font-weight="normal" text-anchor="middle"  stroke="#e6e6e6" stroke-width="0.12">6</text>
<text x="39.8" y="275.76" font-size="10.2" fill="#e6e6e6" font-weight="normal" text-anchor="middle"  stroke="#e6e6e6" stroke-width="0.12">7</text>
<text x="39.8" y="290.2" font-size="10.2" fill="#e6e6e6" font-weight="normal" text-anchor="middle"  stroke="#e6e6e6" stroke-width="0.12">8</text>
<text x="39.8" y="304.64" font-size="10.2" fill="#e6e6e6" font-weight="normal" text-anchor="middle"  stroke="#e6e6e6" stroke-width="0.12">9</text>
<text x="39.8" y="319.08000000000004" font-size="10.2" fill="#e6e6e6" font-weight="normal" text-anchor="middle"  stroke="#e6e6e6" stroke-width="0.12">10</text>
<text x="39.8" y="333.52" font-size="10.2" fill="#e6e6e6" font-weight="normal" text-anchor="middle"  stroke="#e6e6e6" stroke-width="0.12">11</text>
<text x="39.8" y="347.96000000000004" font-size="10.2" fill="#e6e6e6" font-weight="normal" text-anchor="middle"  stroke="#e6e6e6" stroke-width="0.12">12</text>
<text x="39.8" y="362.4" font-size="10.2" fill="#e6e6e6" font-weight="normal" text-anchor="middle"  stroke="#e6e6e6" stroke-width="0.12">13</text>
<text x="39.8" y="376.84000000000003" font-size="10.2" fill="#e6e6e6" font-weight="normal" text-anchor="middle"  stroke="#e6e6e6" stroke-width="0.12">14</text>
<text x="39.8" y="391.28" font-size="10.2" fill="#e6e6e6" font-weight="normal" text-anchor="middle"  stroke="#e6e6e6" stroke-width="0.12">15</text>
<text x="39.8" y="405.72" font-size="10.2" fill="#e6e6e6" font-weight="normal" text-anchor="middle"  stroke="#e6e6e6" stroke-width="0.12">16</text>
<text x="52.1" y="189.62" font-size="10.6" fill="#262626" font-weight="normal" text-anchor="start" textLength="26.5" lengthAdjust="spacingAndGlyphs"  stroke="#262626" stroke-width="0.05">data 1</text>
<text x="100.1" y="189.62" font-size="10.6" fill="#262626" font-weight="normal" text-anchor="start" textLength="26.5" lengthAdjust="spacingAndGlyphs"  stroke="#262626" stroke-width="0.05">data 1</text>
<text x="148.1" y="189.62" font-size="10.6" fill="#262626" font-weight="normal" text-anchor="start" textLength="26.5" lengthAdjust="spacingAndGlyphs"  stroke="#262626" stroke-width="0.05">data 1</text>
<text x="196.1" y="189.62" font-size="10.6" fill="#262626" font-weight="normal" text-anchor="start" textLength="26.5" lengthAdjust="spacingAndGlyphs"  stroke="#262626" stroke-width="0.05">data 1</text>
<text x="52.1" y="204.06" font-size="10.6" fill="#262626" font-weight="normal" text-anchor="start" textLength="26.5" lengthAdjust="spacingAndGlyphs"  stroke="#262626" stroke-width="0.05">data 1</text>
<text x="100.1" y="204.06" font-size="10.6" fill="#262626" font-weight="normal" text-anchor="start" textLength="26.5" lengthAdjust="spacingAndGlyphs"  stroke="#262626" stroke-width="0.05">data 1</text>
<text x="148.1" y="204.06" font-size="10.6" fill="#262626" font-weight="normal" text-anchor="start" textLength="26.5" lengthAdjust="spacingAndGlyphs"  stroke="#262626" stroke-width="0.05">data 1</text>
<text x="196.1" y="204.06" font-size="10.6" fill="#262626" font-weight="normal" text-anchor="start" textLength="26.5" lengthAdjust="spacingAndGlyphs"  stroke="#262626" stroke-width="0.05">data 1</text>
<text x="52.1" y="218.5" font-size="10.6" fill="#262626" font-weight="normal" text-anchor="start" textLength="26.5" lengthAdjust="spacingAndGlyphs"  stroke="#262626" stroke-width="0.05">data 2</text>
<text x="100.1" y="218.5" font-size="10.6" fill="#262626" font-weight="normal" text-anchor="start" textLength="26.5" lengthAdjust="spacingAndGlyphs"  stroke="#262626" stroke-width="0.05">data 2</text>
<text x="148.1" y="218.5" font-size="10.6" fill="#262626" font-weight="normal" text-anchor="start" textLength="26.5" lengthAdjust="spacingAndGlyphs"  stroke="#262626" stroke-width="0.05">data 2</text>
<text x="196.1" y="218.5" font-size="10.6" fill="#262626" font-weight="normal" text-anchor="start" textLength="26.5" lengthAdjust="spacingAndGlyphs"  stroke="#262626" stroke-width="0.05">data 2</text>
<text x="52.1" y="232.94" font-size="10.6" fill="#262626" font-weight="normal" text-anchor="start" textLength="26.5" lengthAdjust="spacingAndGlyphs"  stroke="#262626" stroke-width="0.05">data 2</text>
<text x="100.1" y="232.94" font-size="10.6" fill="#262626" font-weight="normal" text-anchor="start" textLength="26.5" lengthAdjust="spacingAndGlyphs"  stroke="#262626" stroke-width="0.05">data 2</text>
<text x="148.1" y="232.94" font-size="10.6" fill="#262626" font-weight="normal" text-anchor="start" textLength="26.5" lengthAdjust="spacingAndGlyphs"  stroke="#262626" stroke-width="0.05">data 2</text>
<text x="196.1" y="232.94" font-size="10.6" fill="#262626" font-weight="normal" text-anchor="start" textLength="26.5" lengthAdjust="spacingAndGlyphs"  stroke="#262626" stroke-width="0.05">data 2</text>
<text x="52.1" y="247.38" font-size="10.6" fill="#262626" font-weight="normal" text-anchor="start" textLength="26.5" lengthAdjust="spacingAndGlyphs"  stroke="#262626" stroke-width="0.05">data 3</text>
<text x="100.1" y="247.38" font-size="10.6" fill="#262626" font-weight="normal" text-anchor="start" textLength="26.5" lengthAdjust="spacingAndGlyphs"  stroke="#262626" stroke-width="0.05">data 3</text>
<text x="148.1" y="247.38" font-size="10.6" fill="#262626" font-weight="normal" text-anchor="start" textLength="26.5" lengthAdjust="spacingAndGlyphs"  stroke="#262626" stroke-width="0.05">data 3</text>
<text x="196.1" y="247.38" font-size="10.6" fill="#262626" font-weight="normal" text-anchor="start" textLength="26.5" lengthAdjust="spacingAndGlyphs"  stroke="#262626" stroke-width="0.05">data 3</text>
<text x="52.1" y="261.82" font-size="10.6" fill="#262626" font-weight="normal" text-anchor="start" textLength="26.5" lengthAdjust="spacingAndGlyphs"  stroke="#262626" stroke-width="0.05">data 3</text>
<text x="100.1" y="261.82" font-size="10.6" fill="#262626" font-weight="normal" text-anchor="start" textLength="26.5" lengthAdjust="spacingAndGlyphs"  stroke="#262626" stroke-width="0.05">data 3</text>
<text x="148.1" y="261.82" font-size="10.6" fill="#262626" font-weight="normal" text-anchor="start" textLength="26.5" lengthAdjust="spacingAndGlyphs"  stroke="#262626" stroke-width="0.05">data 3</text>
<text x="196.1" y="261.82" font-size="10.6" fill="#262626" font-weight="normal" text-anchor="start" textLength="26.5" lengthAdjust="spacingAndGlyphs"  stroke="#262626" stroke-width="0.05">data 3</text>
<line x1="97.2" y1="206.88" x2="97.2" y2="221.32" stroke="#2f8a4c" stroke-width="1.2" />
<rect x="699.8" y="164.5" width="11.8" height="245" rx="5.9" fill="#363636" />
<path d="M702.5,172.6 L705.8,168 L709.1,172.6 Z" stroke="none" fill="#d0d0d0" stroke-width="1" />
<rect x="702.7" y="176.4" width="6.4" height="174.6" rx="3.2" fill="#c4c4c4" />
<path d="M702.5,401 L705.8,405.6 L709.1,401 Z" stroke="none" fill="#d0d0d0" stroke-width="1" />
<rect x="0.4" y="164" width="28.9" height="267.3" rx="0" fill="#eaeaea" />
<line x1="8" y1="171.5" x2="20.4" y2="171.5" stroke="#c4c4c4" stroke-width="0.8" />
<line x1="8" y1="173.5" x2="20.4" y2="173.5" stroke="#d0d0d0" stroke-width="0.8" />
<rect x="12" y="192" width="10" height="6.8" rx="0" fill="#f4f4f4" stroke="#7a7a7a" stroke-width="0.8" />
<rect x="9.5" y="189.5" width="11" height="8.3" rx="0" fill="#ffffff" stroke="#5a6a80" stroke-width="0.8" />
<rect x="9.5" y="189.5" width="11" height="2.8" rx="0" fill="#3f7fc4" />
<line x1="13.2" y1="192.3" x2="13.2" y2="197.8" stroke="#6a7a90" stroke-width="0.7" />
<line x1="16.9" y1="192.3" x2="16.9" y2="197.8" stroke="#6a7a90" stroke-width="0.7" />
<line x1="9.5" y1="195" x2="20.5" y2="195" stroke="#6a7a90" stroke-width="0.7" />
<rect x="12.8" y="217.5" width="8.7" height="6.5" rx="1.2" fill="#f2f2f2" stroke="#707070" stroke-width="0.9" />
<line x1="14.5" y1="220" x2="19.8" y2="220" stroke="#909090" stroke-width="0.9" />
<line x1="14.5" y1="222" x2="19.8" y2="222" stroke="#909090" stroke-width="0.9" />
<path d="M12,215 l-2.6,4.2 h2.4 l-1.8,4.3 l4,-5 h-2.3 l1.5,-3.5 z" stroke="none" fill="#3f7fc4" stroke-width="1" />
<path d="M10,244.5 l2,-3.5 h7 l2,3.5 v5.5 q0,0.8 -0.8,0.8 h-9.4 q-0.8,0 -0.8,-0.8 z" stroke="#596b82" fill="#9fb0c6" stroke-width="0.9" />
<line x1="10" y1="246.8" x2="21" y2="246.8" stroke="#ffffff" stroke-width="1.2" />
<line x1="10" y1="244.5" x2="21" y2="244.5" stroke="#596b82" stroke-width="0.8" />
<rect x="9.8" y="266" width="12" height="10.5" rx="0" fill="#ffffff" stroke="#7a8494" stroke-width="0.9" />
<rect x="13.8" y="266" width="4" height="10.5" rx="0" fill="#b9d3ee" />
<rect x="9.8" y="266" width="12" height="10.5" rx="0" fill="none" stroke="#7a8494" stroke-width="0.9" />
<line x1="13.8" y1="266" x2="13.8" y2="276.5" stroke="#7a8494" stroke-width="0.8" />
<line x1="17.8" y1="266" x2="17.8" y2="276.5" stroke="#7a8494" stroke-width="0.8" />
<line x1="9.8" y1="268.8" x2="21.8" y2="268.8" stroke="#a0a8b4" stroke-width="0.6" />
<line x1="9.8" y1="271.5" x2="21.8" y2="271.5" stroke="#a0a8b4" stroke-width="0.6" />
<line x1="9.8" y1="274.2" x2="21.8" y2="274.2" stroke="#a0a8b4" stroke-width="0.6" />
<path d="M9.8,302.4 v-3.6 l2,-4.4 h2.2 l0.6,8 z M21.3,302.4 v-3.6 l-2,-4.4 h-2.2 l-0.6,8 z" stroke="none" fill="#7190b4" stroke-width="1" />
<rect x="13.8" y="297" width="3.6" height="2.2" rx="0" fill="#7190b4" />
<rect x="1" y="260" width="3" height="75.3" rx="0" fill="#5aa832" />
<path d="M1.5,296.5 L3.8,298.3 L1.5,300 Z" stroke="none" fill="#ffffff" stroke-width="1" />
<polygon points="10.67,409.48 10.91,407.56 14.09,407.56 14.33,409.48 15.39,409.92 16.92,408.73 19.17,410.98 17.98,412.51 18.42,413.57 20.34,413.81 20.34,416.99 18.42,417.23 17.98,418.29 19.17,419.82 16.92,422.07 15.39,420.88 14.33,421.32 14.09,423.24 10.91,423.24 10.67,421.32 9.61,420.88 8.08,422.07 5.83,419.82 7.02,418.29 6.58,417.23 4.66,416.99 4.66,413.81 6.58,413.57 7.02,412.51 5.83,410.98 8.08,408.73 9.61,409.92" fill="#3a78b6" stroke="#3a78b6" stroke-width="0.6" stroke-linejoin="round"/>
<circle cx="12.5" cy="415.4" r="3.4" fill="none" stroke="#eaeaea" stroke-width="1.4"/>
<rect x="26.7" y="207.6" width="68.35" height="13.2" rx="0" fill="none" stroke="#f41a1a" stroke-width="3.5" />
<rect x="96.9" y="206" width="1.6" height="16.3" rx="0" fill="#1d7a42" />
<rect x="96.6" y="219.8" width="2.6" height="2.6" rx="0" fill="#17703a" />
<rect x="29.3" y="408" width="683.3" height="23.3" rx="0" fill="#2c2c2c" />
<path d="M110,408 q4,0 4,4 v12 q0,4 4,4 h35.9 q4,0 4,-4 v-12 q0,-4 4,-4 z" stroke="none" fill="#ffffff" stroke-width="1" />
<text x="120.1" y="421.7" font-size="10.8" fill="#2b2b2b" font-weight="normal" text-anchor="start" textLength="31.3" lengthAdjust="spacingAndGlyphs" stroke="#2b2b2b" stroke-width="0.55">Sheet1</text>
<rect x="120" y="425.6" width="31.5" height="1.5" rx="0" fill="#2f9a55" />
<line x1="160.7" y1="412" x2="160.7" y2="424.5" stroke="#6a6a6a" stroke-width="1" />
<path d="M53,415.5 l-3,3.5 l3,3.5" stroke="#9a9a9a" fill="none" stroke-width="1" />
<path d="M73.5,415.5 l3,3.5 l-3,3.5" stroke="#9a9a9a" fill="none" stroke-width="1" />
<path d="M191.5,419 h9.5 M196.25,414.25 v9.5" stroke="#e0e0e0" fill="none" stroke-width="1.1" />
<circle cx="442" cy="416.8" r="0.9" fill="#d0d0d0"/>
<circle cx="442" cy="419.8" r="0.9" fill="#d0d0d0"/>
<circle cx="442" cy="422.8" r="0.9" fill="#d0d0d0"/>
<rect x="455.4" y="412.8" width="243.6" height="13" rx="6.5" fill="#363636" />
<path d="M463.8,416.3 L458.9,419.7 L463.8,423.1 Z" stroke="none" fill="#d0d0d0" stroke-width="1" />
<rect x="466.8" y="416.5" width="202.7" height="6.1" rx="3" fill="#c0c0c0" />
<path d="M690.6,416.3 L695.5,419.7 L690.6,423.1 Z" stroke="none" fill="#d0d0d0" stroke-width="1" />
<rect x="1" y="431.3" width="711.5" height="16.2" rx="0" fill="#313131" />
<rect x="511" y="432.3" width="31.6" height="15.2" rx="0" fill="#3f3f3f" />
<text x="5.9" y="443" font-size="8.3" fill="#e6e6e6" font-weight="normal" text-anchor="start" textLength="21.4" lengthAdjust="spacingAndGlyphs"  stroke="#e6e6e6" stroke-width="0.3">Ready</text>
<text x="40.4" y="443" font-size="8.3" fill="#e6e6e6" font-weight="normal" text-anchor="start" textLength="41.4" lengthAdjust="spacingAndGlyphs"  stroke="#e6e6e6" stroke-width="0.3">Sheet 1 of 1</text>
<text x="93.5" y="443" font-size="8.3" fill="#e6e6e6" font-weight="normal" text-anchor="start" textLength="68.6" lengthAdjust="spacingAndGlyphs"  stroke="#e6e6e6" stroke-width="0.3">Workbook Statistics</text>
<text x="213.7" y="443" font-size="8.3" fill="#e6e6e6" font-weight="normal" text-anchor="start" textLength="86.8" lengthAdjust="spacingAndGlyphs"  stroke="#e6e6e6" stroke-width="0.3">Accessibility: Good to go</text>
<rect x="177.2" y="435.4" width="10.6" height="9.4" rx="1" fill="none" stroke="#d8d8d8" stroke-width="1" />
<line x1="177.2" y1="437.6" x2="187.8" y2="437.6" stroke="#d8d8d8" stroke-width="0.9" />
<line x1="179" y1="439.5" x2="179" y2="443" stroke="#a8a8a8" stroke-width="0.9" />
<circle cx="184.6" cy="441.9" r="3.1" fill="#313131" stroke="#d8d8d8" stroke-width="1"/>
<circle cx="184.6" cy="441.9" r="1.3" fill="#e8e8e8"/>
<circle cx="205.9" cy="436.4" r="1.3" fill="none" stroke="#d8d8d8" stroke-width="1"/>
<path d="M201.6,437.3 q1,1.8 2.6,1.6 h3.2 q1.6,0 2.4,-1.6 M204.3,439 l-0.5,3 l-0.6,2.4 M207,439 l0.4,2" stroke="#d8d8d8" fill="none" stroke-width="1.1" />
<path d="M206.6,442.6 l1.8,1.8 l3.4,-3.6" stroke="#d8d8d8" fill="none" stroke-width="1.1" />
<rect x="521.8" y="434.8" width="10.5" height="10" rx="0" fill="none" stroke="#e6e6e6" stroke-width="0.9" />
<line x1="524.425" y1="434.8" x2="524.425" y2="444.8" stroke="#e6e6e6" stroke-width="0.9" />
<line x1="521.8" y1="437.3" x2="532.3" y2="437.3" stroke="#e6e6e6" stroke-width="0.9" />
<line x1="527.05" y1="434.8" x2="527.05" y2="444.8" stroke="#e6e6e6" stroke-width="0.9" />
<line x1="521.8" y1="439.8" x2="532.3" y2="439.8" stroke="#e6e6e6" stroke-width="0.9" />
<line x1="529.675" y1="434.8" x2="529.675" y2="444.8" stroke="#e6e6e6" stroke-width="0.9" />
<line x1="521.8" y1="442.3" x2="532.3" y2="442.3" stroke="#e6e6e6" stroke-width="0.9" />
<rect x="552" y="435" width="10" height="9.5" rx="0" fill="none" stroke="#cfcfcf" stroke-width="0.9" />
<rect x="554.5" y="437" width="5" height="5.5" rx="0" fill="none" stroke="#cfcfcf" stroke-width="0.8" />
<path d="M582.5,435 v9.5 h10 v-9.5 M586,435 v5 h3.5 v-5" stroke="#cfcfcf" fill="none" stroke-width="0.9" />
<line x1="606.5" y1="440" x2="612.5" y2="440" stroke="#cfcfcf" stroke-width="0.9" />
<line x1="616.4" y1="440" x2="690.6" y2="440" stroke="#9a9a9a" stroke-width="0.8" />
<rect x="652.8" y="436" width="2.6" height="8" rx="0" fill="#cfcfcf" />
<path d="M694.5,440 h6 M697.5,437 v6" stroke="#cfcfcf" fill="none" stroke-width="0.9" />
<rect x="0" y="446" width="715" height="1.2" rx="0" fill="#252525" />
<rect x="0" y="447.2" width="715" height="1.8" rx="0" fill="#727272" />
</svg>
</body></html>
